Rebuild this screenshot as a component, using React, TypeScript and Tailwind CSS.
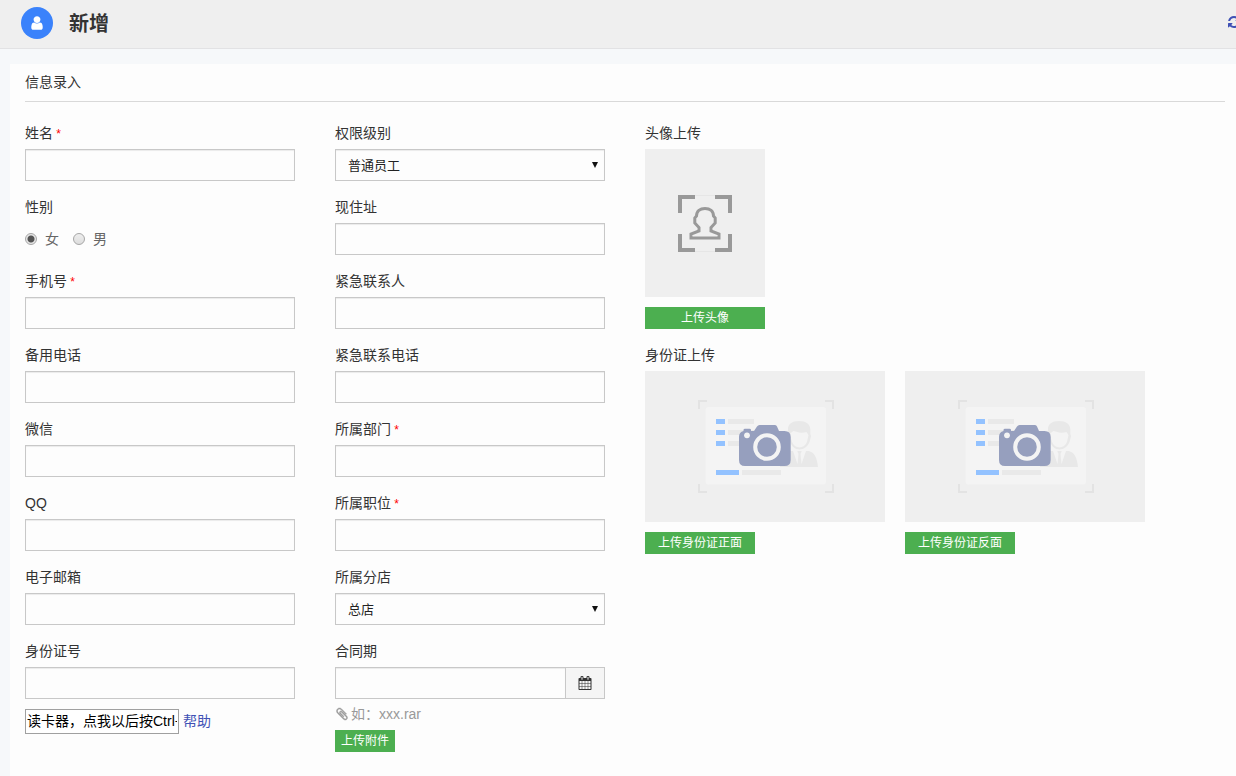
import { useState } from 'react';
import type { ReactNode } from 'react';
import clsx from 'clsx';

const inputClass =
  'block h-8 w-full min-w-0 border border-[#c8c8c8] bg-[#fdfdfd] px-3 text-[13px] text-[#222] shadow-[inset_0_1px_1px_rgba(0,0,0,0.075)] outline-none';

const iconPaths = {
  user: 'M1536 1399q0 109-62.5 187t-150.5 78h-854q-88 0-150.5-78t-62.5-187q0-85 8.5-160.5t31.5-152 58.5-131 94-89 134.5-34.5q131 128 313 128t313-128q76 0 134.5 34.5t94 89 58.5 131 31.5 152 8.5 160.5zm-256-887q0 159-112.5 271.5t-271.5 112.5-271.5-112.5-112.5-271.5 112.5-271.5 271.5-112.5 271.5 112.5 112.5 271.5z',
  refresh:
    'M1639 1056q0 5-1 7-64 268-268 434.5t-478 166.5q-146 0-282.5-55t-243.5-157l-129 129q-19 19-45 19t-45-19-19-45v-448q0-26 19-45t45-19h448q26 0 45 19t19 45-19 45l-137 137q71 66 161 102t187 36q134 0 250-65t186-179q11-17 53-117 8-23 30-23h192q13 0 22.5 9.5t9.5 22.5zm25-800v448q0 26-19 45t-45 19h-448q-26 0-45-19t-19-45 19-45l138-138q-148-137-349-137-134 0-250 65t-186 179q-11 17-53 117-8 23-30 23h-199q-13 0-22.5-9.5t-9.5-22.5v-7q65-268 270-434.5t480-166.5q146 0 284 55.5t245 156.5l130-129q19-19 45-19t45 19 19 45z',
  calendar:
    'M192 1664h288v-288h-288v288zm352 0h320v-288h-320v288zm-352-352h288v-320h-288v320zm352 0h320v-320h-320v320zm-352-384h288v-288h-288v288zm736 736h320v-288h-320v288zm-384-736h320v-288h-320v288zm768 736h288v-288h-288v288zm-384-352h320v-320h-320v320zm-352-864v-288q0-13-9.5-22.5t-22.5-9.5h-64q-13 0-22.5 9.5t-9.5 22.5v288q0 13 9.5 22.5t22.5 9.5h64q13 0 22.5-9.5t9.5-22.5zm736 864h288v-320h-288v320zm-384-384h320v-288h-320v288zm384 0h288v-288h-288v288zm32-480v-288q0-13-9.5-22.5t-22.5-9.5h-64q-13 0-22.5 9.5t-9.5 22.5v288q0 13 9.5 22.5t22.5 9.5h64q13 0 22.5-9.5t9.5-22.5zm384-64v1280q0 52-38 90t-90 38h-1408q-52 0-90-38t-38-90v-1280q0-52 38-90t90-38h128v-96q0-66 47-113t113-47h64q66 0 113 47t47 113v96h384v-96q0-66 47-113t113-47h64q66 0 113 47t47 113v96h128q52 0 90 38t38 90z',
  paperclip:
    'M1596 1385q0 117-79 196t-196 79q-135 0-235-100l-777-776q-113-115-113-271 0-159 110-270t269-111q158 0 273 113l605 606q10 10 10 22 0 16-30.5 46.5t-46.5 30.5q-13 0-23-10l-606-607q-79-77-181-77-106 0-179 75t-73 181q0 105 76 181l776 777q63 63 145 63 64 0 106-42t42-106q0-82-63-145l-581-581q-26-24-60-24-29 0-48 19t-19 48q0 32 25 59l410 410q10 10 10 22 0 16-31 47t-47 31q-12 0-22-10l-410-410q-63-61-63-149 0-82 57-139t139-57q88 0 149 63l581 581q100 98 100 235z',
};

function Icon({ name, className }: { name: keyof typeof iconPaths; className?: string }) {
  return (
    <svg viewBox="0 0 1792 1792" fill="currentColor" className={clsx('shrink-0', className)} aria-hidden="true">
      <path d={iconPaths[name]} />
    </svg>
  );
}

interface FieldProps {
  id: string;
  label: string;
  required?: boolean;
  children?: ReactNode;
}

function Field({ id, label, required, children }: FieldProps) {
  return (
    <div>
      <label htmlFor={id} className="mb-1.5 block h-5">
        {label}
        {required && <span className="text-xs text-[#f00]"> *</span>}
      </label>
      {children ?? <input id={id} type="text" className={inputClass} />}
    </div>
  );
}

function Select({ id, options }: { id: string; options: string[] }) {
  return (
    <div className="relative">
      <select id={id} className={clsx(inputClass, 'appearance-none pt-0.5 pr-6')}>
        {options.map((option) => (
          <option key={option}>{option}</option>
        ))}
      </select>
      <svg
        viewBox="0 0 6 6"
        className="pointer-events-none absolute top-[13px] right-[7px] size-1.5 fill-[#111]"
        aria-hidden="true"
      >
        <path d="M0 0h6L3 6z" />
      </svg>
    </div>
  );
}

function UploadButton({ children, className }: { children: ReactNode; className?: string }) {
  return (
    <button
      type="button"
      className={clsx('block h-[22px] bg-[#4caf50] text-xs leading-[22px] text-white hover:bg-[#439a46]', className)}
    >
      {children}
    </button>
  );
}

function AvatarPlaceholder() {
  return (
    <svg viewBox="0 0 120 148" className="block h-[148px] w-[120px] bg-[#efefef]" fill="none" aria-hidden="true">
      <path d="M50 46.500h20M50 102.500h20" stroke="#e6e6e6" />
      <path d="M35 64V48h15M70 48h15v16M85 85v16H70M50 101H35V85" stroke="#999" strokeWidth="4" />
      <path
        d="M46 89V85L54 82V78.500L49.800 74V69L51.500 67C51.500 62 55 59.500 60 59.500S68.500 62 68.500 67L70.200 69V74L66 78.500V82L74 85V89Z"
        stroke="#999"
        strokeWidth="3"
      />
    </svg>
  );
}

function IdCardPlaceholder() {
  return (
    <svg viewBox="0 0 240 151" className="block h-[151px] w-[240px] bg-[#efefef]" fill="none" aria-hidden="true">
      <path d="M54 38v-8h8M180 30h8v8M188 113v8h-8M62 121h-8v-8" stroke="#e3e3e3" strokeWidth="2" />
      <rect x="60.500" y="36" width="120.500" height="77.500" rx="3" fill="#f4f4f4" />
      {/* Text lines */}
      <path d="M71 48h9v5h-9zM71 59h9v5h-9zM71 70h9v5h-9zM71 99h23v5h-23z" fill="#93c2ff" />
      <path d="M83 48h26v5h-26zM83 59h26v5h-26zM83 70h26v5h-26zM97 99h39v5h-39z" fill="#e9e9e9" />
      {/* Portrait */}
      <path
        d="M143 66V58C143 53 147 50 154 50S165 53 165.300 58V63L166 65L164.500 71C163 75 159 78.500 154.500 78.500S146.500 75 145 71ZM145.500 62V66L147 71C148.500 74 151 76.500 154.500 76.500S160.500 74 162 71L163.500 64L161.500 61C155 63 150 60 148.500 60Z"
        fill="#e8e8e8"
        fillRule="evenodd"
      />
      <path
        d="M135 96C136 87 139 82 145 80H148L152.500 93L153.500 83L152.300 80H156.700L155.500 83L156.500 93L161 80H164C170 82 172 87 173 96Z"
        fill="#e8e8e8"
      />
      {/* Camera */}
      <path
        d="M94 66Q94 61 98.500 60V59Q98.500 57.800 100 57.800H104.500Q106 57.800 106 59V60H109L112 55.500Q113 54 114.500 54H130Q131.500 54 132 55.500L134 60H139.500Q145.700 60 145.700 66V89Q145.700 95 139.500 95H100Q94 95 94 89Z"
        fill="#969fbe"
      />
      <circle cx="122" cy="76" r="11.800" stroke="#f4f4f4" strokeWidth="4" />
      <circle cx="102" cy="64.300" r="2.900" fill="#f4f4f4" />
    </svg>
  );
}

const genders = ['女', '男'];

export default function App() {
  const [gender, setGender] = useState('女');

  return (
    <div className="flex min-h-screen flex-col overflow-x-hidden bg-[#f6f8fa] font-['Liberation_Sans','Noto_Sans_CJK_SC',sans-serif] text-sm leading-5 text-[#333]">
      <header className="flex h-[49px] shrink-0 items-center border-b border-[#e2e2e4] bg-[#efefef] pb-0.5 pl-[21px]">
        <span className="flex size-8 items-center justify-center rounded-full bg-[#3a82fb]">
          <Icon name="user" className="size-4 text-white" />
        </span>
        <h1 className="ml-4 pt-0.5 text-xl leading-8 font-bold">新增</h1>
        <button type="button" aria-label="刷新" className="-mr-[5px] ml-auto pb-0.5 text-[#3f51b5]">
          <Icon name="refresh" className="size-3.5" />
        </button>
      </header>

      <main className="mt-[15px] ml-2.5 grow bg-[#fdfdfd] pt-2 pr-[11px] pb-6 pl-[15px]">
        <h2 className="border-b border-[#d9d9d9] pb-[9px]">信息录入</h2>

        <form className="grid grid-cols-4 items-start gap-x-10 pt-[21px]" onSubmit={(e) => e.preventDefault()}>
          {/* Personal info */}
          <div className="flex flex-col gap-4">
            <Field id="name" label="姓名" required />
            <fieldset>
              <legend className="mb-1.5 block h-5">性别</legend>
              <div className="flex h-8 items-center gap-3.5 text-[#666]">
                {genders.map((item) => (
                  <label key={item} className="flex items-center gap-2">
                    <input
                      type="radio"
                      name="gender"
                      value={item}
                      checked={gender === item}
                      onChange={() => setGender(item)}
                      className="size-3 appearance-none rounded-full border border-[#a6a6a6] bg-linear-to-b from-[#eee] to-[#ddd] checked:bg-[radial-gradient(circle,#555_3px,#e6e6e6_4px)]"
                    />
                    {item}
                  </label>
                ))}
              </div>
            </fieldset>
            <Field id="mobile" label="手机号" required />
            <Field id="phone" label="备用电话" />
            <Field id="wechat" label="微信" />
            <Field id="qq" label="QQ" />
            <Field id="email" label="电子邮箱" />
            <Field id="idno" label="身份证号">
              <input id="idno" type="text" className={inputClass} />
              <div className="mt-2.5 flex items-center gap-1">
                <input
                  type="text"
                  aria-label="读卡器"
                  defaultValue="读卡器，点我以后按Ctrl+V"
                  className="h-[25px] w-[154px] border border-[#a0a0a0] bg-white px-px pb-[3px] text-black"
                />
                <a href="#help" className="pb-0.5 text-[#3f51b5]">
                  帮助
                </a>
              </div>
            </Field>
          </div>

          {/* Job info */}
          <div className="flex flex-col gap-4">
            <Field id="level" label="权限级别">
              <Select id="level" options={['普通员工', '管理员']} />
            </Field>
            <Field id="address" label="现住址" />
            <Field id="contact" label="紧急联系人" />
            <Field id="contactPhone" label="紧急联系电话" />
            <Field id="department" label="所属部门" required />
            <Field id="position" label="所属职位" required />
            <Field id="branch" label="所属分店">
              <Select id="branch" options={['总店', '分店']} />
            </Field>
            <Field id="contract" label="合同期">
              <div className="flex">
                <input id="contract" type="text" className={inputClass} />
                <button
                  type="button"
                  aria-label="选择日期"
                  className="flex h-8 w-[39px] shrink-0 items-center justify-center border border-l-0 border-[#c8c8c8] bg-[#f5f5f5]"
                >
                  <Icon name="calendar" className="size-3.5" />
                </button>
              </div>
              <p className="mt-[5px] flex items-center gap-0.5 text-[#999]">
                <Icon name="paperclip" className="size-3.5 stroke-current stroke-[60]" />
                如：xxx.rar
              </p>
              <UploadButton className="mt-1.5 px-1.5">上传附件</UploadButton>
            </Field>
          </div>

          {/* Uploads */}
          <div className="col-span-2 flex flex-col gap-4">
            <section>
              <h3 className="mb-1.5">头像上传</h3>
              <AvatarPlaceholder />
              <UploadButton className="mt-2.5 w-[120px]">上传头像</UploadButton>
            </section>
            <section>
              <h3 className="mb-1.5">身份证上传</h3>
              <div className="flex flex-wrap gap-5">
                {['上传身份证正面', '上传身份证反面'].map((text) => (
                  <div key={text}>
                    <IdCardPlaceholder />
                    <UploadButton className="mt-2.5 px-[13px]">{text}</UploadButton>
                  </div>
                ))}
              </div>
            </section>
          </div>
        </form>
      </main>
    </div>
  );
}
